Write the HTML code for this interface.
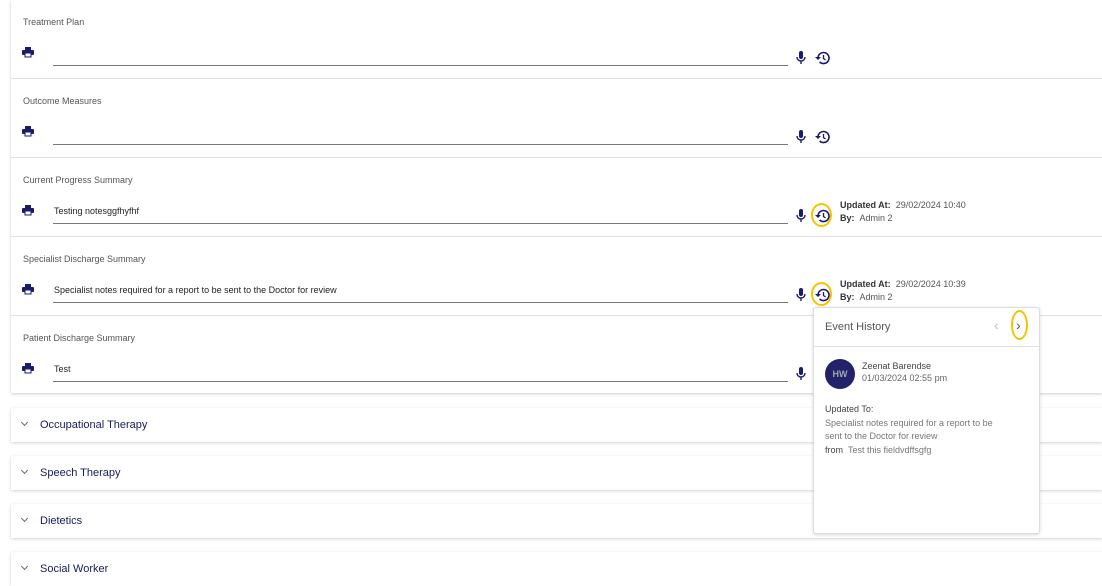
<!DOCTYPE html>
<html><head><style>
body{margin:0;width:1102px;height:571px;overflow:hidden;background:#fff;font-family:"Liberation Sans",sans-serif;position:relative}
.a{position:absolute}
.card{left:11px;top:0;width:1091px;height:393px;box-shadow:0 1px 3px rgba(0,0,0,.2);background:#fff}
.sep{left:11px;width:1091px;height:1px;background:#e0e0e0}
.lbl{left:23px;font-size:9px;color:#555}
.ul{left:53px;width:735px;height:1px;background:#777}
.val{left:54px;font-size:9px;color:#222}
.acc{left:11px;width:1091px;height:34px;background:#fff;box-shadow:0 1px 3px rgba(0,0,0,.18)}
.acc span{position:absolute;left:29px;top:11px;font-size:11px;color:#1a1a5e}
.acc i{position:absolute;left:11px;top:12px;width:4px;height:4px;border-right:1px solid #666;border-bottom:1px solid #666;transform:rotate(45deg)}
.upd{left:840px;font-size:9px;color:#333;line-height:12.5px}
.upd b{font-weight:bold}
.upd em{font-style:normal;color:#555}
</style></head><body>
<div class="a card"></div>
<div class="a sep" style="top:78px"></div>
<div class="a sep" style="top:157px"></div>
<div class="a sep" style="top:236px"></div>
<div class="a sep" style="top:315px"></div>

<div class="a lbl" style="top:17px">Treatment Plan</div>
<div class="a lbl" style="top:96px">Outcome Measures</div>
<div class="a lbl" style="top:175px">Current Progress Summary</div>
<div class="a lbl" style="top:254px">Specialist Discharge Summary</div>
<div class="a lbl" style="top:333px">Patient Discharge Summary</div>

<div class="a ul" style="top:65px"></div>
<div class="a ul" style="top:144px"></div>
<div class="a ul" style="top:223px"></div>
<div class="a ul" style="top:302px"></div>
<div class="a ul" style="top:381px"></div>
<div class="a val" style="top:206px">Testing notesggfhyfhf</div>
<div class="a val" style="top:285px">Specialist notes required for a report to be sent to the Doctor for review</div>
<div class="a val" style="top:364px">Test</div>

<svg class="a" style="left:22px;top:47px" width="12" height="11" viewBox="0 0 12 11"><rect x="3" y="0" width="6" height="3" fill="#1a1a6e"/><rect x="0" y="3" width="12" height="5" rx="1" fill="#1a1a6e"/><rect x="3" y="6" width="6" height="4" fill="#fff" stroke="#1a1a6e"/></svg>
<svg class="a" style="left:22px;top:126px" width="12" height="11" viewBox="0 0 12 11"><rect x="3" y="0" width="6" height="3" fill="#1a1a6e"/><rect x="0" y="3" width="12" height="5" rx="1" fill="#1a1a6e"/><rect x="3" y="6" width="6" height="4" fill="#fff" stroke="#1a1a6e"/></svg>
<svg class="a" style="left:22px;top:205px" width="12" height="11" viewBox="0 0 12 11"><rect x="3" y="0" width="6" height="3" fill="#1a1a6e"/><rect x="0" y="3" width="12" height="5" rx="1" fill="#1a1a6e"/><rect x="3" y="6" width="6" height="4" fill="#fff" stroke="#1a1a6e"/></svg>
<svg class="a" style="left:22px;top:284px" width="12" height="11" viewBox="0 0 12 11"><rect x="3" y="0" width="6" height="3" fill="#1a1a6e"/><rect x="0" y="3" width="12" height="5" rx="1" fill="#1a1a6e"/><rect x="3" y="6" width="6" height="4" fill="#fff" stroke="#1a1a6e"/></svg>
<svg class="a" style="left:22px;top:363px" width="12" height="11" viewBox="0 0 12 11"><rect x="3" y="0" width="6" height="3" fill="#1a1a6e"/><rect x="0" y="3" width="12" height="5" rx="1" fill="#1a1a6e"/><rect x="3" y="6" width="6" height="4" fill="#fff" stroke="#1a1a6e"/></svg>

<svg class="a" style="left:796px;top:51px" width="10" height="14" viewBox="0 0 10 14"><rect x="3" y="0" width="4" height="8" rx="2" fill="#1a1a6e"/><path d="M1 6a4 4 0 0 0 8 0M5 10v3" stroke="#1a1a6e" stroke-width="1.4" fill="none"/></svg>
<svg class="a" style="left:796px;top:130px" width="10" height="14" viewBox="0 0 10 14"><rect x="3" y="0" width="4" height="8" rx="2" fill="#1a1a6e"/><path d="M1 6a4 4 0 0 0 8 0M5 10v3" stroke="#1a1a6e" stroke-width="1.4" fill="none"/></svg>
<svg class="a" style="left:796px;top:209px" width="10" height="14" viewBox="0 0 10 14"><rect x="3" y="0" width="4" height="8" rx="2" fill="#1a1a6e"/><path d="M1 6a4 4 0 0 0 8 0M5 10v3" stroke="#1a1a6e" stroke-width="1.4" fill="none"/></svg>
<svg class="a" style="left:796px;top:288px" width="10" height="14" viewBox="0 0 10 14"><rect x="3" y="0" width="4" height="8" rx="2" fill="#1a1a6e"/><path d="M1 6a4 4 0 0 0 8 0M5 10v3" stroke="#1a1a6e" stroke-width="1.4" fill="none"/></svg>
<svg class="a" style="left:796px;top:367px" width="10" height="14" viewBox="0 0 10 14"><rect x="3" y="0" width="4" height="8" rx="2" fill="#1a1a6e"/><path d="M1 6a4 4 0 0 0 8 0M5 10v3" stroke="#1a1a6e" stroke-width="1.4" fill="none"/></svg>

<svg class="a" style="left:815px;top:51px" width="15" height="14" viewBox="0 0 15 14"><path d="M3 7a5.5 5.5 0 1 1 1.6 3.9" stroke="#1a1a6e" stroke-width="1.6" fill="none"/><path d="M0 6h6L3 9z" fill="#1a1a6e"/><path d="M8.5 4v3.5l2 1.5" stroke="#1a1a6e" stroke-width="1.3" fill="none"/></svg>
<svg class="a" style="left:815px;top:130px" width="15" height="14" viewBox="0 0 15 14"><path d="M3 7a5.5 5.5 0 1 1 1.6 3.9" stroke="#1a1a6e" stroke-width="1.6" fill="none"/><path d="M0 6h6L3 9z" fill="#1a1a6e"/><path d="M8.5 4v3.5l2 1.5" stroke="#1a1a6e" stroke-width="1.3" fill="none"/></svg>
<div class="a" style="left:811px;top:203px;width:21px;height:24px;border:2px solid #f5c400;border-radius:50%;box-sizing:border-box"></div>
<svg class="a" style="left:815px;top:209px" width="15" height="14" viewBox="0 0 15 14"><path d="M3 7a5.5 5.5 0 1 1 1.6 3.9" stroke="#1a1a6e" stroke-width="1.6" fill="none"/><path d="M0 6h6L3 9z" fill="#1a1a6e"/><path d="M8.5 4v3.5l2 1.5" stroke="#1a1a6e" stroke-width="1.3" fill="none"/></svg>
<div class="a" style="left:811px;top:282px;width:21px;height:24px;border:2px solid #f5c400;border-radius:50%;box-sizing:border-box"></div>
<svg class="a" style="left:815px;top:288px" width="15" height="14" viewBox="0 0 15 14"><path d="M3 7a5.5 5.5 0 1 1 1.6 3.9" stroke="#1a1a6e" stroke-width="1.6" fill="none"/><path d="M0 6h6L3 9z" fill="#1a1a6e"/><path d="M8.5 4v3.5l2 1.5" stroke="#1a1a6e" stroke-width="1.3" fill="none"/></svg>

<div class="a upd" style="top:199px"><b>Updated At:</b>&nbsp;&nbsp;<em>29/02/2024 10:40</em><br><b>By:</b>&nbsp;&nbsp;<em>Admin 2</em></div>
<div class="a upd" style="top:278px"><b>Updated At:</b>&nbsp;&nbsp;<em>29/02/2024 10:39</em><br><b>By:</b>&nbsp;&nbsp;<em>Admin 2</em></div>

<div class="a acc" style="top:408px"><i></i><span>Occupational Therapy</span></div>
<div class="a acc" style="top:456px"><i></i><span>Speech Therapy</span></div>
<div class="a acc" style="top:504px"><i></i><span>Dietetics</span></div>
<div class="a acc" style="top:552px"><i></i><span>Social Worker</span></div>

<div class="a" style="left:813px;top:307px;width:225px;height:225px;background:#fff;border:1px solid #ddd;border-radius:3px;box-shadow:0 1px 3px rgba(0,0,0,.15)">
 <div class="a" style="left:11px;top:13px;font-size:11px;color:#555">Event History</div>
 <div class="a" style="left:180px;top:9px;font-size:14px;color:#bbb">&#8249;</div>
 <div class="a" style="left:197px;top:2px;width:17px;height:30px;border:2px solid #f5c400;border-radius:50%;box-sizing:border-box"></div>
 <div class="a" style="left:202px;top:9px;font-size:14px;color:#555">&#8250;</div>
 <div class="a" style="left:0;top:38px;width:225px;height:1px;background:#e2e2e2"></div>
 <div class="a" style="left:11px;top:51px;width:30px;height:30px;border-radius:50%;background:#22226a;color:#9aa;font-size:9px;font-weight:bold;text-align:center;line-height:30px">HW</div>
 <div class="a" style="left:48px;top:52px;font-size:9px;color:#444;line-height:12px">Zeenat Barendse<br><span style="color:#666">01/03/2024 02:55 pm</span></div>
 <div class="a" style="left:11px;top:95px;font-size:9px;color:#444;line-height:13.5px;width:185px">Updated To:<br><span style="color:#777">Specialist notes required for a report to be sent to the Doctor for review</span><br>from&nbsp;&nbsp;<span style="color:#777">Test this fieldvdffsgfg</span></div>
</div>
</body></html>
